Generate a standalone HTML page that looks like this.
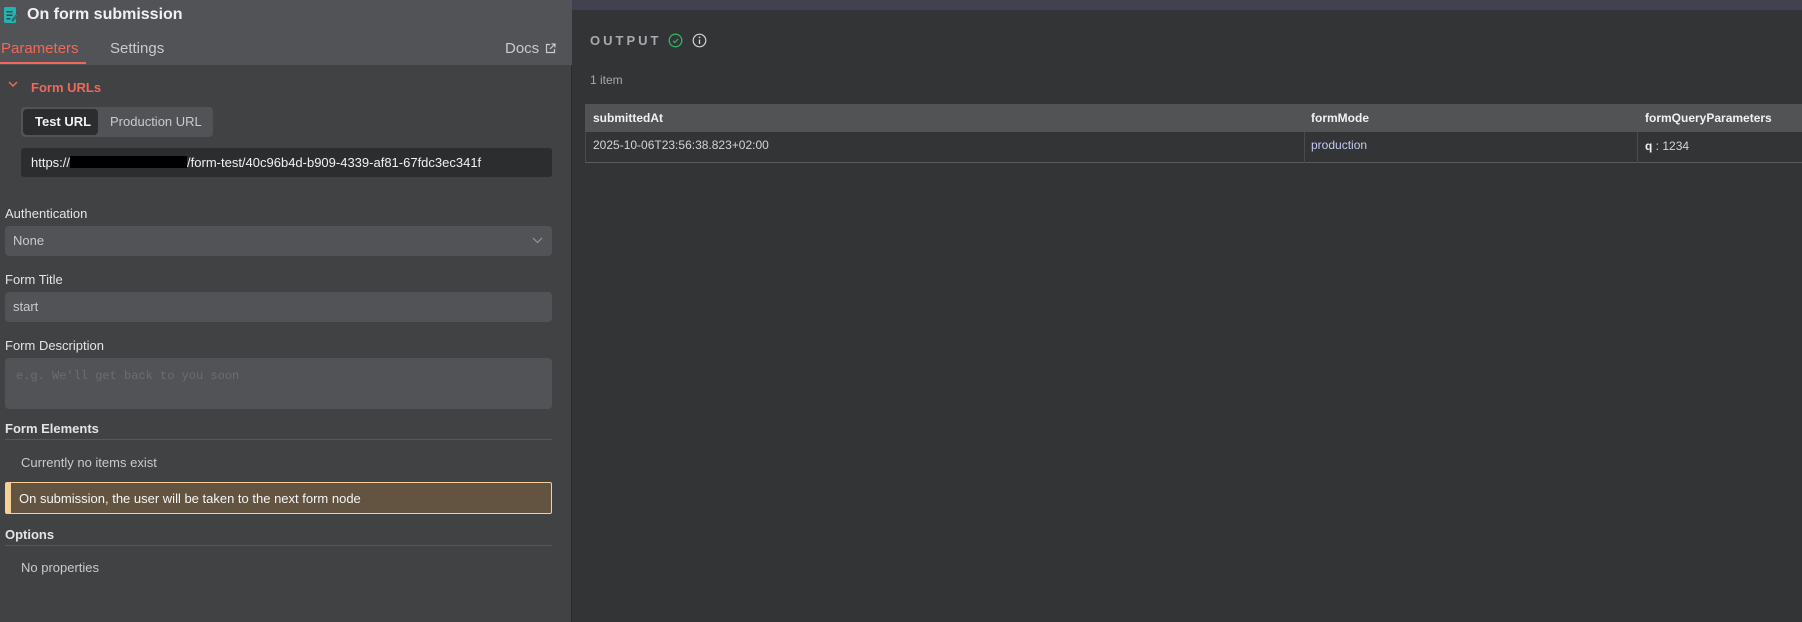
<!DOCTYPE html>
<html><head><meta charset="utf-8"><style>
*{box-sizing:border-box;margin:0;padding:0}
body{width:1802px;height:622px;overflow:hidden;background:#333436;font-family:"Liberation Sans",sans-serif;position:relative;color:#d4d4d8}
.a{position:absolute;white-space:nowrap}
#left{position:absolute;left:0;top:0;width:572px;height:622px;background:#414244;border-right:1px solid #2a2b2d}
#hdr{position:absolute;left:0;top:0;width:572px;height:65px;background:#525356}
.lbl{font-size:13px;color:#e4e4e7}
.inp{position:absolute;left:5px;width:547px;background:#525356;border-radius:4px}
</style></head><body>
<div class="a" style="left:572px;top:0;width:1230px;height:10px;background:#414150"></div>
<div id="left">
<div id="hdr"></div>
<svg class="a" style="left:3px;top:6px" width="16" height="18" viewBox="0 0 16 18"><rect x="1" y="1" width="12" height="16" rx="1.5" fill="#1fb5b0"/><rect x="3.5" y="5" width="6" height="1.5" fill="#414244"/><rect x="3.5" y="8.5" width="6" height="1.5" fill="#414244"/><rect x="3.5" y="12" width="4" height="1.5" fill="#414244"/><path d="M9 14 L15 7 L16 8 L10 15 Z" fill="#1fb5b0" stroke="#414244" stroke-width=".8"/></svg>
<div class="a" style="left:27px;top:6px;font-size:16px;font-weight:bold;color:#f1f1f3">On form submission</div>
<div class="a" style="left:1px;top:40px;font-size:15px;color:#f0685a">Parameters</div>
<div class="a" style="left:0;top:62px;width:86px;height:2px;background:#f0685a"></div>
<div class="a" style="left:110px;top:40px;font-size:15px;color:#c8cad0">Settings</div>
<div class="a" style="left:505px;top:40px;font-size:15px;color:#c8cad0">Docs</div>
<svg class="a" style="left:545px;top:43px" width="11" height="11" viewBox="0 0 11 11" fill="none" stroke="#c8cad0" stroke-width="1.2"><path d="M5 1.5H1.5v8h8V6M6.5 1h3.5v3.5M10 1L5 6"/></svg>
<svg class="a" style="left:8px;top:81px" width="10" height="7" viewBox="0 0 10 7"><path d="M1 1l4 4 4-4" fill="none" stroke="#f0685a" stroke-width="1.5"/></svg>
<div class="a" style="left:31px;top:80px;font-size:13px;font-weight:bold;color:#f0685a">Form URLs</div>
<div class="a" style="left:21px;top:107px;width:192px;height:30px;background:#525356;border-radius:4px"></div>
<div class="a" style="left:23px;top:109px;width:75px;height:26px;background:#2c2d2f;border-radius:4px"></div>
<div class="a" style="left:35px;top:114px;font-size:13px;font-weight:bold;color:#f1f1f3">Test URL</div>
<div class="a" style="left:110px;top:114px;font-size:13px;color:#c8cad0">Production URL</div>
<div class="a" style="left:21px;top:148px;width:531px;height:29px;background:#2c2d2f;border-radius:3px"></div>
<div class="a" style="left:31px;top:155px;font-size:13px;color:#f1f1f3">https://<span style="display:inline-block;width:117px;height:12px;background:#000;vertical-align:-1px"></span>/form-test/40c96b4d-b909-4339-af81-67fdc3ec341f</div>
<div class="a lbl" style="left:5px;top:206px">Authentication</div>
<div class="inp" style="top:226px;height:30px"></div>
<div class="a" style="left:13px;top:233px;font-size:13px;color:#c8cad0">None</div>
<svg class="a" style="left:532px;top:237px" width="11" height="7" viewBox="0 0 11 7"><path d="M1 1l4.5 4.5L10 1" fill="none" stroke="#9a9ca2" stroke-width="1"/></svg>
<div class="a lbl" style="left:5px;top:272px">Form Title</div>
<div class="inp" style="top:292px;height:30px"></div>
<div class="a" style="left:13px;top:299px;font-size:13px;color:#c8cad0">start</div>
<div class="a lbl" style="left:5px;top:338px">Form Description</div>
<div class="inp" style="top:358px;height:51px"></div>
<div class="a" style="left:16px;top:369px;font-size:12px;font-family:'Liberation Mono',monospace;color:#6b6d72">e.g. We'll get back to you soon</div>
<div class="a lbl" style="left:5px;top:421px;font-weight:bold">Form Elements</div>
<div class="a" style="left:5px;top:439px;width:547px;height:1px;background:#56575a"></div>
<div class="a" style="left:21px;top:455px;font-size:13px;color:#c8cad0">Currently no items exist</div>
<div class="a" style="left:5px;top:482px;width:547px;height:32px;background:#625440;border:1px solid #f5cf96;border-left:6px solid #f5cf96;border-radius:2px"></div>
<div class="a" style="left:19px;top:491px;font-size:13px;color:#f5f5f5">On submission, the user will be taken to the next form node</div>
<div class="a lbl" style="left:5px;top:527px;font-weight:bold">Options</div>
<div class="a" style="left:5px;top:545px;width:547px;height:1px;background:#56575a"></div>
<div class="a" style="left:21px;top:560px;font-size:13px;color:#c8cad0">No properties</div>
</div>
<div class="a" style="left:590px;top:33px;font-size:13px;font-weight:bold;letter-spacing:3px;color:#a8aab0">OUTPUT</div>
<svg class="a" style="left:668px;top:33px" width="15" height="15" viewBox="0 0 15 15"><circle cx="7.5" cy="7.5" r="6.3" fill="none" stroke="#2fb36a" stroke-width="1.3"/><path d="M5 7.8l1.8 1.8L10 6" fill="none" stroke="#2fb36a" stroke-width="1.2"/></svg>
<svg class="a" style="left:692px;top:33px" width="15" height="15" viewBox="0 0 15 15"><circle cx="7.5" cy="7.5" r="6.3" fill="none" stroke="#d4d4d8" stroke-width="1.2"/><path d="M7.5 6.5v4.5" stroke="#d4d4d8" stroke-width="1.3"/><circle cx="7.5" cy="4.4" r=".9" fill="#d4d4d8"/></svg>
<div class="a" style="left:590px;top:73px;font-size:12px;color:#a8aab0">1 item</div>
<div class="a" style="left:585px;top:104px;width:1217px;height:28px;background:#525354"></div>
<div class="a" style="left:585px;top:132px;width:1217px;height:31px;border-left:1px solid #4a4b4e;border-bottom:1px solid #5a5b5e"></div>
<div class="a" style="left:1304px;top:132px;width:1px;height:31px;background:#4a4b4e"></div>
<div class="a" style="left:1637px;top:132px;width:1px;height:31px;background:#4a4b4e"></div>
<div class="a" style="left:593px;top:111px;font-size:12px;font-weight:bold;color:#f1f1f3">submittedAt</div>
<div class="a" style="left:1311px;top:111px;font-size:12px;font-weight:bold;color:#f1f1f3">formMode</div>
<div class="a" style="left:1645px;top:111px;font-size:12px;font-weight:bold;color:#f1f1f3">formQueryParameters</div>
<div class="a" style="left:593px;top:138px;font-size:12px;color:#d4d4d8">2025-10-06T23:56:38.823+02:00</div>
<div class="a" style="left:1311px;top:138px;font-size:12px;color:#c4c8f0">production</div>
<div class="a" style="left:1645px;top:139px;font-size:12px;color:#d4d4d8"><b style="color:#f1f1f3">q</b> : 1234</div>
</body></html>
